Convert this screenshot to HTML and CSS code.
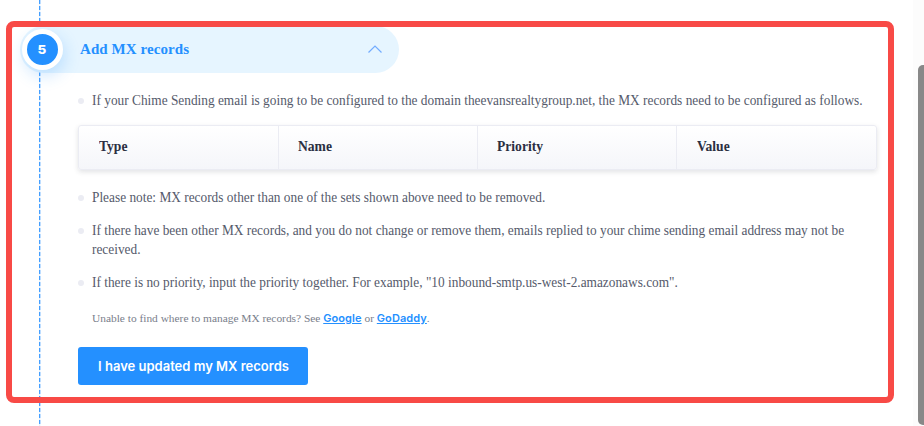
FILE: index.html
```html
<!DOCTYPE html>
<html lang="en">
<head>
<meta charset="utf-8">
<title>Add MX records</title>
<link rel="stylesheet" href="styles.css">
</head>
<body>
<main class="page">
  <div class="timeline"></div>
  <section class="step">
    <header class="step-header">
      <span class="step-number"><b>5</b></span>
      <h2 class="step-title">Add MX records</h2>
      <svg class="chevron" width="16" height="10" viewBox="0 0 16 10"><path d="M1.5 8.5 8 2l6.5 6.5" fill="none" stroke="#73acff" stroke-width="1.2"/></svg>
    </header>
    <div class="step-body">
      <p class="note"><span class="line">If your Chime Sending email is going to be configured to the domain theevansrealtygroup.net, the MX records need to be configured as follows.</span></p>
      <div class="records">
        <div class="cell"><span>Type</span></div>
        <div class="cell"><span>Name</span></div>
        <div class="cell"><span>Priority</span></div>
        <div class="cell"><span>Value</span></div>
      </div>
      <p class="note"><span class="line">Please note: MX records other than one of the sets shown above need to be removed.</span></p>
      <p class="note"><span class="line">If there have been other MX records, and you do not change or remove them, emails replied to your chime sending email address may not be<br>received.</span></p>
      <p class="note"><span class="line">If there is no priority, input the priority together. For example, "10 inbound-smtp.us-west-2.amazonaws.com".</span></p>
      <p class="help">Unable to find where to manage MX records? See <a>Google</a> or <a>GoDaddy</a>.</p>
      <button class="confirm">I have updated my MX records</button>
    </div>
  </section>
  <div class="highlight"></div>
  <div class="scrollbar"><div class="thumb"></div></div>
</main>
</body>
</html>
```
FILE: styles.css
```css
* { box-sizing: border-box; }
body { margin: 0; background: #fff; overflow: hidden; }
.page {
  position: relative;
  width: 924px;
  height: 426px;
  overflow: hidden;
  font-family: "Liberation Serif", serif;
  color: #555a6b;
}
.timeline {
  position: absolute;
  left: 39px;
  top: 0;
  width: 2px;
  height: 426px;
  background:
    linear-gradient(90deg, transparent 50%, rgba(255, 255, 255, .65) 50%),
    repeating-linear-gradient(#449fff 0 4px, #e6f3ff 4px 6px);
}
.step { padding: 26px 0 0 20px; }
.step-header {
  position: relative;
  display: flex;
  align-items: center;
  width: 379px;
  height: 47px;
  padding: 0 16px 1px 0;
  border-radius: 23.5px;
  background: #e6f5ff;
}
.step-number {
  display: flex;
  align-items: center;
  justify-content: center;
  width: 41px;
  height: 41px;
  margin-left: 1.5px;
  border: 5px solid #fff;
  border-radius: 50%;
  background: #2490ff;
  box-shadow: 2px 6px 16px rgba(36, 144, 255, .22);
  color: #fff;
  font: 800 12px Inter, sans-serif;
}
.step-number b { font-weight: 800; transform: scaleX(1.12); }
.step-title {
  margin: 0 auto 1px 17.5px;
  color: #2490ff;
  font-size: 15px;
  letter-spacing: .08px;
  line-height: 20px;
}
.step-body {
  width: 799px;
  margin-left: 58px;
  padding-top: 18px;
}
.note {
  display: flex;
  margin: 0 0 14px;
  font-size: 15px;
  line-height: 19px;
}
.note::before {
  content: "";
  flex: none;
  width: 6px;
  height: 6px;
  margin: 7px 8px 0 0;
  border-radius: 50%;
  background: #ebecf3;
}
.line {
  white-space: nowrap;
  transform: scaleX(.889);
  transform-origin: left;
}
.records {
  display: grid;
  grid-template-columns: 200px 199px 199px 1fr;
  height: 45px;
  margin: 0 0 18px;
  border: 1px solid #ebecf3;
  border-radius: 3px;
  background: linear-gradient(#fff, #f5f6fa);
  box-shadow: 0 2px 5px rgba(32, 36, 55, .13);
}
.note:first-child { margin-bottom: 15px; }
.cell {
  padding: 11px 19px;
  border-right: 1px solid #ebecf3;
  color: #2b2f42;
  font-size: 15px;
  font-weight: bold;
  line-height: 19px;
}
.cell:first-child { padding-left: 20px; }
.cell:last-child { border-right: 0; padding-left: 20px; }
.cell span {
  display: inline-block;
  transform: scaleX(.905);
  transform-origin: left;
}
.help {
  margin: 19px 0 21px 14px;
  font-size: 11.4px;
  line-height: 15px;
  color: #797e8b;
  white-space: nowrap;
}
.help a {
  color: #2490ff;
  font: 600 11px Inter, sans-serif;
  letter-spacing: .08px;
  text-decoration: underline;
}
.confirm {
  display: block;
  width: 230px;
  height: 38px;
  padding: 0 0 0 1px;
  border: 0;
  border-radius: 3px;
  background: #2490ff;
  color: #fff;
  font: 600 13px Inter, sans-serif;
}
.highlight {
  position: absolute;
  left: 6px;
  top: 21px;
  width: 888px;
  height: 382px;
  border: 6px solid #f84a46;
  border-radius: 8px;
}
.scrollbar {
  position: absolute;
  right: 0;
  top: 0;
  width: 11px;
  height: 426px;
  padding: 65px 0 0 5px;
  background: #fcfcfc;
}
.thumb {
  width: 12px;
  height: 360px;
  border-radius: 5px;
  background: #888;
}
```
